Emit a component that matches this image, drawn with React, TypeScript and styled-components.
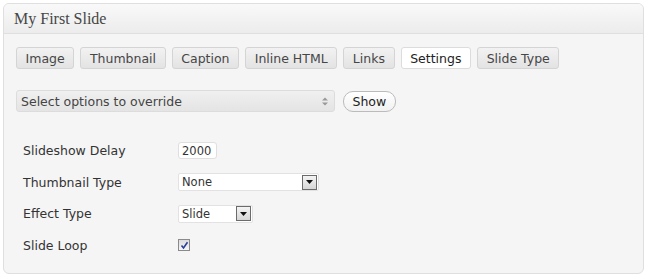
import styled, { createGlobalStyle } from 'styled-components';

const tabs = ['Image', 'Thumbnail', 'Caption', 'Inline HTML', 'Links', 'Settings', 'Slide Type'];
const activeTab = 'Settings';

const GlobalStyle = createGlobalStyle`
  body {
    margin: 0;
    background: #ffffff;
    font-family: "DejaVu Sans", Verdana, sans-serif;
    font-size: 12.5px;
    color: #333333;
  }
`;

const Panel = styled.div`
  margin: 3px;
  width: 639px;
  height: 269px;
  border: 1px solid #dfdfdf;
  border-radius: 6px;
  background: #f5f5f5;
  overflow: hidden;
`;

const PanelHeader = styled.div`
  height: 29px;
  border-bottom: 1px solid #dfdfdf;
  background: linear-gradient(to bottom, #f9f9f9, #ececec);
  display: flex;
  align-items: center;
  padding-left: 10px;
  font-family: "Liberation Serif", Georgia, serif;
  font-size: 16px;
  color: #464646;
`;

const PanelBody = styled.div`
  padding: 13px 12px 0;
`;

const TabBar = styled.div`
  display: flex;
  gap: 6px;
`;

const Tab = styled.div<{ $active?: boolean }>`
  height: 20px;
  padding: 0 8.6px;
  display: flex;
  align-items: center;
  border: 1px solid ${(p) => (p.$active ? '#dcdcdc' : '#d4d4d4')};
  border-radius: 3px;
  background: ${(p) => (p.$active ? '#ffffff' : 'linear-gradient(to bottom, #f2f2f2, #e3e3e3)')};
  color: ${(p) => (p.$active ? '#222222' : '#464646')};
`;

const OverrideRow = styled.div`
  margin-top: 21px;
  display: flex;
  align-items: center;
  gap: 8px;
`;

const OverrideSelect = styled.div`
  width: 307px;
  height: 20px;
  padding: 0 6px 0 4px;
  display: flex;
  align-items: center;
  justify-content: space-between;
  border: 1px solid #dcdcdc;
  border-radius: 3px;
  background: linear-gradient(to bottom, #f0f0f0, #e4e4e4);
  color: #444444;
`;

const Arrows = styled.svg`
  width: 6px;
  height: 9px;
`;

const ShowButton = styled.div`
  height: 19px;
  padding: 0 8.5px;
  display: flex;
  align-items: center;
  border: 1px solid #bbbbbb;
  border-radius: 10px;
  background: linear-gradient(to bottom, #ffffff, #f1f1f1);
  color: #222222;
`;

const Form = styled.div`
  margin-top: 23px;
  padding-left: 7px;
  display: grid;
  grid-template-columns: 155px 1fr;
  grid-auto-rows: 31.5px;
  align-items: center;
`;

const Label = styled.div`
  color: #333333;
`;

const TextInput = styled.div`
  width: 34px;
  height: 15px;
  padding-left: 3px;
  display: flex;
  align-items: center;
  border: 1px solid #dfdfdf;
  border-radius: 3px;
  background: #ffffff;
  font-size: 11.5px;
  color: #333333;
`;

const Dropdown = styled.div<{ $width: number }>`
  width: ${(p) => p.$width}px;
  height: 16px;
  padding-left: 3px;
  display: flex;
  align-items: center;
  justify-content: space-between;
  border: 1px solid #e2e2e2;
  border-radius: 2px;
  background: #ffffff;
  font-size: 11.5px;
  color: #333333;
`;

const DropButton = styled.div`
  width: 13px;
  height: 13px;
  margin-right: 1px;
  display: flex;
  align-items: center;
  justify-content: center;
  border: 1px solid #6b6b6b;
  background: linear-gradient(to bottom, #f4f4f4, #d6d6d6);
`;

const Checkbox = styled.div`
  width: 10px;
  height: 10px;
  border: 1px solid #8a8a8a;
  background: linear-gradient(to bottom, #dcdcdc, #f6f6f6);
  display: flex;
  align-items: center;
  justify-content: center;
`;

const DownArrow = () => (
  <svg width="7" height="4" viewBox="0 0 7 4">
    <path d="M0 0h7L3.5 4z" fill="#111" />
  </svg>
);

export default function App() {
  return (
    <>
      <GlobalStyle />
      <Panel>
        <PanelHeader>My First Slide</PanelHeader>
        <PanelBody>
          <TabBar>
            {tabs.map((t) => (
              <Tab key={t} $active={t === activeTab}>
                {t}
              </Tab>
            ))}
          </TabBar>
          <OverrideRow>
            <OverrideSelect>
              <span>Select options to override</span>
              <Arrows viewBox="0 0 6 9">
                <path d="M0 3.5L3 0.5L6 3.5z M0 5.5L3 8.5L6 5.5z" fill="#999" />
              </Arrows>
            </OverrideSelect>
            <ShowButton>Show</ShowButton>
          </OverrideRow>
          <Form>
            <Label>Slideshow Delay</Label>
            <div>
              <TextInput>2000</TextInput>
            </div>
            <Label>Thumbnail Type</Label>
            <div>
              <Dropdown $width={136}>
                <span>None</span>
                <DropButton>
                  <DownArrow />
                </DropButton>
              </Dropdown>
            </div>
            <Label>Effect Type</Label>
            <div>
              <Dropdown $width={70}>
                <span>Slide</span>
                <DropButton>
                  <DownArrow />
                </DropButton>
              </Dropdown>
            </div>
            <Label>Slide Loop</Label>
            <div>
              <Checkbox>
                <svg width="9" height="9" viewBox="0 0 9 9">
                  <path d="M1.5 4.5L3.5 7L7.5 1.2" stroke="#2a3f9a" strokeWidth="1.6" fill="none" />
                </svg>
              </Checkbox>
            </div>
          </Form>
        </PanelBody>
      </Panel>
    </>
  );
}
